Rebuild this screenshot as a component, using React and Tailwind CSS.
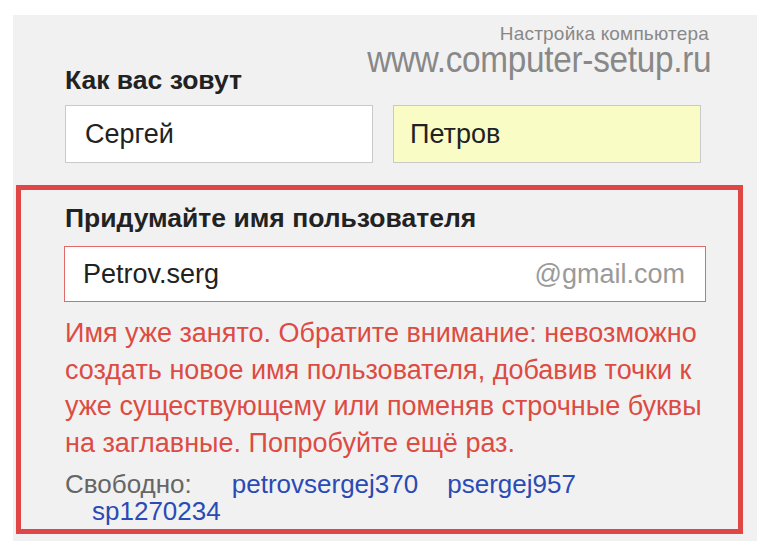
import React from "react";

const font = { fontFamily: '"Liberation Sans", Arial, sans-serif' };

export default function App() {
  return (
    <div className="w-[768px] h-[541px] bg-white pt-[15px] pl-[13px] pr-[11px] overflow-hidden" style={font}>
      <div className="relative h-full bg-[#f1f1f1] pt-[50px]">
        {/* watermark */}
        <div className="absolute right-[46px] top-[10px] flex flex-col items-end text-[#888] leading-none">
          <span className="text-[19px] leading-[18px] tracking-[0.2px] mr-[2px]">Настройка компьютера</span>
          <span className="text-[37px] leading-[34px] tracking-[-0.3px] scale-x-[0.9] origin-right">www.computer-setup.ru</span>
        </div>

        <div className="pl-[52px]">
          <div className="text-[26.5px] font-bold text-[#222] leading-[30px]">Как вас зовут</div>
          <div className="flex gap-[20px] mt-[10px]">
            <div className="w-[308px] h-[58px] bg-white border border-[#c9c9c9] flex items-center pl-[19px] text-[27px] text-[#222]">
              Сергей
            </div>
            <div className="w-[308px] h-[58px] bg-[#fafcc6] border border-[#c9c9c9] flex items-center pl-[16px] text-[27px] text-[#222]">
              Петров
            </div>
          </div>
        </div>

        <div className="ml-[3px] mt-[22px] w-[727px] h-[349px] border-[5px] border-[#e04646] pl-[44px] pr-[26px] pt-[13px]">
          <div className="text-[26.5px] font-bold text-[#222] leading-[30px]">Придумайте имя пользователя</div>
          <div className="mt-[13px] ml-[-1px] w-[642px] h-[56px] bg-white border border-[#e06a6a] flex items-center justify-between pl-[18px] pr-[20px] text-[27px]">
            <span className="text-[#222]">Petrov.serg</span>
            <span className="text-[#9a9a9a]">@gmail.com</span>
          </div>
          <div className="mt-[13px] text-[27px] leading-[36.5px] text-[#dd4b43]">
            Имя уже занято. Обратите внимание: невозможно создать новое имя пользователя, добавив точки к уже существующему или поменяв строчные буквы на заглавные. Попробуйте ещё раз.
          </div>
          <div className="mt-[10px] text-[26px] leading-[27px]">
            <span className="text-[#666]">Свободно:</span>
            <span className="text-[#2a4ab5] ml-[40px]">petrovsergej370</span>
            <span className="text-[#2a4ab5] ml-[29px]">psergej957</span>
            <div className="text-[#2a4ab5] pl-[27px]">sp1270234</div>
          </div>
        </div>
      </div>
    </div>
  );
}
